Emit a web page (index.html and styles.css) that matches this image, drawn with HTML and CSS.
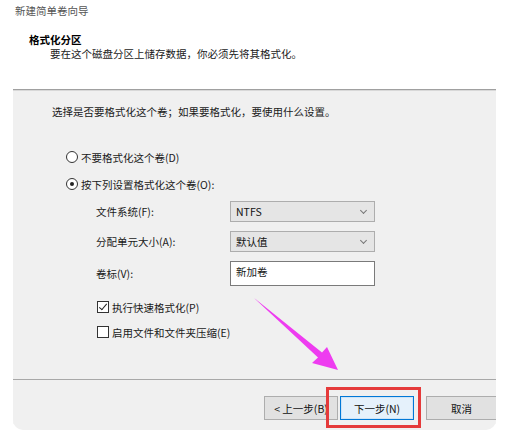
FILE: index.html
```html
<!DOCTYPE html>
<html lang="zh-CN">
<head>
    <meta charset="UTF-8">
    <title>新建简单卷向导</title>
    <link rel="stylesheet" href="styles.css">
</head>
<body>
<div class="wizard">
    <div class="header">
        <div class="caption">新建简单卷向导</div>
        <div class="page-title">格式化分区</div>
        <div class="page-desc">要在这个磁盘分区上储存数据，你必须先将其格式化。</div>
    </div>

    <div class="panel">
        <div class="content">
            <div class="intro">选择是否要格式化这个卷；如果要格式化，要使用什么设置。</div>

            <div class="option first"><span class="radio"></span>不要格式化这个卷(D)</div>
            <div class="option"><span class="radio checked"></span>按下列设置格式化这个卷(O):</div>

            <div class="field">
                <span class="field-label">文件系统(F):</span>
                <div class="select">NTFS<span class="chevron"></span></div>
            </div>
            <div class="field">
                <span class="field-label">分配单元大小(A):</span>
                <div class="select">默认值<span class="chevron"></span></div>
            </div>
            <div class="field">
                <span class="field-label">卷标(V):</span>
                <div class="textbox">新加卷</div>
            </div>

            <div class="check first"><span class="box checked"></span>执行快速格式化(P)</div>
            <div class="check"><span class="box"></span>启用文件和文件夹压缩(E)</div>
        </div>

        <div class="footer">
            <button class="btn">&lt; 上一步(B)</button>
            <button class="btn primary">下一步(N)</button>
            <button class="btn cancel">取消</button>
        </div>
    </div>
</div>

<!-- annotation overlay -->
<svg class="arrow" width="518" height="443" viewBox="0 0 518 443">
    <polygon points="254,298 256,299.5 322,352.5 327,347 338,370 312,363 318,357.5" fill="#ee3cf0"/>
</svg>
<div class="highlight"></div>
</body>
</html>
```

FILE: styles.css
```css
body {
    margin: 0;
    background-color: white;
    font-family: "Noto Sans CJK SC", "Liberation Sans", sans-serif;
    font-size: 10.5px;
    color: #1a1a1a;
    width: 518px;
    height: 443px;
    overflow: hidden;
}

.wizard {
    width: 496px;
}

.header {
    height: 89px;
    padding-top: 4px;
    box-sizing: border-box;
}

.caption {
    margin-left: 15px;
    line-height: 14px;
    color: #555;
}

.page-title {
    margin-top: 15px;
    margin-left: 29px;
    line-height: 14px;
    font-weight: bold;
    color: #000;
}

.page-desc {
    margin-left: 50px;
    line-height: 14px;
}

.panel {
    margin-left: 13px;
    width: 483px;
    height: 341px;
    background-color: #f0f0f0;
    border-top: 1px solid #a0a0a0;
    box-shadow: inset 0 1px 0 #d8d8d8;
    border-radius: 0 0 10px 10px;
    overflow: hidden;
    box-sizing: border-box;
    display: flex;
    flex-direction: column;
}

.content {
    height: 290px;
    border-bottom: 1px solid #a8a8a8;
    padding-left: 39px;
    padding-top: 14px;
    box-sizing: border-box;
}

.intro {
    line-height: 16px;
}

.option {
    display: flex;
    align-items: center;
    height: 16px;
    margin-top: 11px;
    margin-left: 14px;
}

.option.first {
    margin-top: 29px;
}

.radio {
    width: 10px;
    height: 10px;
    border: 1px solid #333;
    border-radius: 50%;
    background: white;
    margin-right: 3px;
    position: relative;
}

.radio.checked::after {
    content: "";
    position: absolute;
    left: 3px;
    top: 3px;
    width: 4px;
    height: 4px;
    border-radius: 50%;
    background: #222;
}

.field {
    display: flex;
    align-items: center;
    margin-left: 44px;
    margin-top: 9px;
}

.field-label {
    width: 134px;
}

.select {
    width: 145px;
    height: 21px;
    box-sizing: border-box;
    border: 1px solid #adadad;
    background: #e5e5e5;
    padding-left: 5px;
    display: flex;
    align-items: center;
    justify-content: space-between;
    color: #111;
}

.field:nth-of-type(2) {
    margin-top: 10px;
}

.chevron {
    width: 4px;
    height: 4px;
    border-right: 1px solid #777;
    border-bottom: 1px solid #777;
    transform: rotate(45deg);
    margin-right: 8px;
    margin-top: -3px;
}

.textbox {
    width: 145px;
    height: 25px;
    box-sizing: border-box;
    border: 1px solid #7a7a7a;
    background: white;
    padding: 2px 5px;
    line-height: 16px;
}

.check {
    display: flex;
    align-items: center;
    height: 16px;
    margin-left: 45px;
    margin-top: 9px;
}

.check.first {
    margin-top: 13px;
}

.box {
    width: 10px;
    height: 10px;
    border: 1px solid #333;
    background: white;
    margin-right: 3px;
    position: relative;
}

.box.checked::after {
    content: "";
    position: absolute;
    left: 3px;
    top: 0px;
    width: 3px;
    height: 7px;
    border-right: 1px solid #222;
    border-bottom: 1px solid #222;
    transform: rotate(40deg);
}

.footer {
    flex: 1;
    display: flex;
    align-items: flex-start;
    padding-top: 16px;
    padding-left: 251px;
}

.btn {
    font-family: inherit;
    font-size: 10.5px;
    height: 24px;
    width: 74px;
    padding: 0;
    border: 1px solid #adadad;
    background: #e1e1e1;
    color: #111;
    flex-shrink: 0;
}

.btn.primary {
    margin-left: 2px;
    border: 1px solid #0078d7;
    background: #e5f1fb;
    box-shadow: inset 0 0 0 1px #cfe4f6;
}

.btn.cancel {
    width: 71px;
    margin-left: 12px;
}

.arrow {
    position: absolute;
    left: 0;
    top: 0;
}

.highlight {
    position: absolute;
    left: 326px;
    top: 387px;
    width: 89px;
    height: 35px;
    border: 3px solid #e53a3a;
}
```
